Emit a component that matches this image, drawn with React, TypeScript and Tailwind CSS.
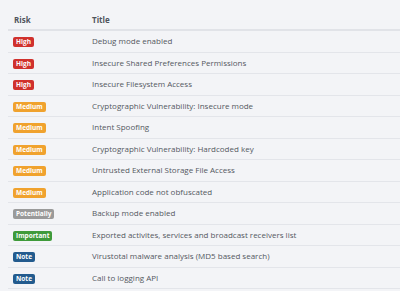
const rows: { risk: string; title: string }[] = [
  { risk: "High", title: "Debug mode enabled" },
  { risk: "High", title: "Insecure Shared Preferences Permissions" },
  { risk: "High", title: "Insecure Filesystem Access" },
  { risk: "Medium", title: "Cryptographic Vulnerability: Insecure mode" },
  { risk: "Medium", title: "Intent Spoofing" },
  { risk: "Medium", title: "Cryptographic Vulnerability: Hardcoded key" },
  { risk: "Medium", title: "Untrusted External Storage File Access" },
  { risk: "Medium", title: "Application code not obfuscated" },
  { risk: "Potentially", title: "Backup mode enabled" },
  { risk: "Important", title: "Exported activites, services and broadcast receivers list" },
  { risk: "Note", title: "Virustotal malware analysis (MD5 based search)" },
  { risk: "Note", title: "Call to logging API" },
];

const badge: Record<string, string> = {
  High: "bg-[#d0312d]",
  Medium: "bg-[#f0a22e]",
  Potentially: "bg-[#9a9a9a]",
  Important: "bg-[#3e9a3a]",
  Note: "bg-[#235b8e]",
};

export default function App() {
  return (
    <div className="min-h-[291px] w-[400px] overflow-hidden bg-[#f3f4f7] pl-2 font-['Open_Sans',sans-serif] text-[8px] text-[#54585f]">
      <div className="flex h-[31px] items-center border-b-2 border-[#e1e3e8] pt-[11px] font-bold text-[#50555c]">
        <div className="w-[84px] pl-[6px]">Risk</div>
        <div>Title</div>
      </div>
      {rows.map((r, i) => (
        <div key={i} className="box-border flex h-[21.5px] items-center border-b border-[#e3e5ea]">
          <div className="w-[84px] pl-[5px]">
            <span
              className={`inline-flex h-[10px] items-center rounded-[2px] px-[3px] text-[6.5px] font-bold leading-none text-white ${badge[r.risk]}`}
            >
              {r.risk}
            </span>
          </div>
          <div className="whitespace-nowrap">{r.title}</div>
        </div>
      ))}
    </div>
  );
}
